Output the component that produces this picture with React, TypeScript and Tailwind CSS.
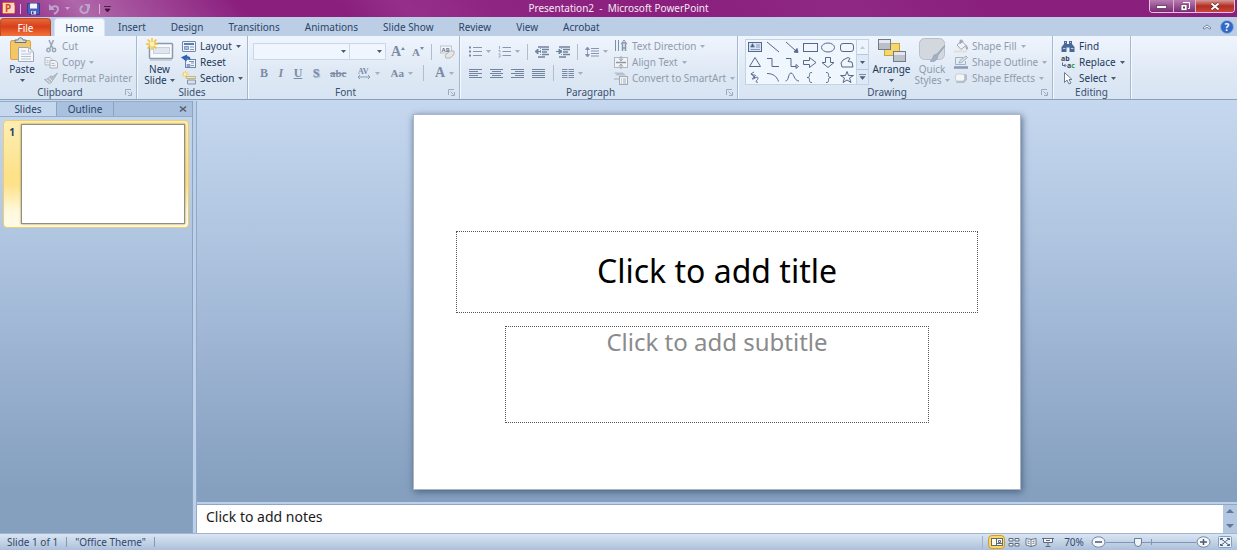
import React, { useState } from 'react';

interface IconProps {
  w?: number;
  h?: number;
  className?: string;
  children: React.ReactNode;
}

const Icon: React.FC<IconProps> = ({ w = 14, h = 14, className = '', children }) => (
  <svg width={w} height={h} viewBox={`0 0 ${w} ${h}`} fill="none" className={`shrink-0 overflow-visible ${className}`} aria-hidden="true">
    {children}
  </svg>
);

const Caret: React.FC<{ muted?: boolean }> = ({ muted }) => (
  <Icon w={5} h={3}>
    <path d="M0 0h5L2.500 3z" fill={muted ? '#a3afbd' : '#4b5a70'} />
  </Icon>
);

const Divider = () => <span className="h-4 w-px bg-[#aebdd0]" />;

/* ---------- ribbon building blocks ---------- */

interface GroupProps {
  label: string;
  width: string;
  launcher?: boolean;
  children: React.ReactNode;
}

const Group: React.FC<GroupProps> = ({ label, width, launcher, children }) => (
  <section aria-label={label} className={`flex shrink-0 flex-col border-r border-[#a3b8d1] shadow-[1px_0_0_#f4f9ff] ${width}`}>
    <div className="flex h-[50px] items-start">{children}</div>
    <div className="flex h-[13px] items-center">
      <span className="flex-1 text-center text-[10px] leading-[13px] text-[#3a506f]">{label}</span>
      {launcher && (
        <button aria-label={`${label} options`} className="flex w-4 justify-center">
          <Icon w={7} h={7}>
            <path d="M0.5 6V0.5H6M2.500 2.500L5.500 5.500M6.500 3v3.500H3" stroke="#9aacc2" />
          </Icon>
        </button>
      )}
    </div>
  </section>
);

interface ItemProps {
  icon: React.ReactNode;
  label: string;
  caret?: boolean;
  muted?: boolean;
}

const Item: React.FC<ItemProps> = ({ icon, label, caret, muted }) => (
  <button className={`flex h-4 items-center gap-1 whitespace-nowrap text-[10px] leading-4 ${muted ? 'text-[#8f9bab]' : 'text-[#1e395b]'}`}>
    {icon}
    <span>{label}</span>
    {caret && <Caret muted={muted} />}
  </button>
);

interface BigItemProps {
  icon: React.ReactNode;
  lines: string[];
  width: string;
  muted?: boolean;
}

const BigItem: React.FC<BigItemProps> = ({ icon, lines, width, muted }) => (
  <button className={`flex shrink-0 flex-col items-center text-[10px] leading-[11px] ${width} ${muted ? 'text-[#8f9bab]' : 'text-[#1e395b]'}`}>
    <span className="flex h-7 items-center">{icon}</span>
    <span>{lines[0]}</span>
    <span className="flex h-[11px] items-center gap-[3px]">
      {lines[1]}
      <Caret muted={muted} />
    </span>
  </button>
);

const Tool: React.FC<{ label: string; caret?: boolean; children: React.ReactNode }> = ({ label, caret, children }) => (
  <button aria-label={label} className="flex h-4 items-center gap-1 text-[#7c8ba3]">
    {children}
    {caret && <Caret muted />}
  </button>
);

/* ---------- icons ---------- */

const PasteIcon = () => (
  <Icon w={26} h={26}>
    <rect x="1.500" y="3.500" width="20" height="19" rx="1.500" fill="#f3c766" stroke="#d9a544" />
    <path d="M6 5.500V3h3c0-3 5-3 5 0h3v2.500z" fill="#d5d8dc" stroke="#6c727b" />
    <path d="M9.500 10.500h10l5 4.500v9.500h-15z" fill="#f6f8fb" stroke="#9aa8bd" />
    <path d="M19.500 10.500V15h5M12 14h5M12 17h10M12 19.500h10M12 22h10" stroke="#b6c2d4" />
  </Icon>
);

const CutIcon = () => (
  <Icon>
    <path d="M5 1l4 9M9.500 1L6 9" stroke="#9aa6b6" strokeWidth="1.500" />
    <circle cx="4.500" cy="11" r="1.700" stroke="#9aa6b6" strokeWidth="1.500" />
    <circle cx="10" cy="11" r="1.700" stroke="#9aa6b6" strokeWidth="1.500" />
  </Icon>
);

const CopyIcon = () => (
  <Icon>
    <path d="M1 2.500h5l2 2V10H1z" fill="#eef1f5" stroke="#b1b8c2" />
    <path d="M6 5.500h5l2.500 2V13H6z" fill="#f1f3f6" stroke="#a9b0bb" />
    <path d="M7.500 8.500h3M7.500 10.500h4M2.500 5.500h2M2.500 7.500h2" stroke="#b5bcc7" />
  </Icon>
);

const BrushIcon = () => (
  <Icon>
    <path d="M13.500 2L10 7.500l-3.500 5C5 13 3 11 .5 8.500 3 8.500 5 7 6.500 5l2.500.5z" fill="#b5bec9" stroke="#a2acb9" strokeWidth=".8" />
    <path d="M2.500 8.500l4 3.500M5 7l3 3" stroke="#e7ebf0" />
  </Icon>
);

const Burst = () => (
  <>
    <path d="M6 0v12M0 6h12M1.500 1.500l9 9M10.500 1.500l-9 9" stroke="#f5c02c" strokeWidth="1.500" />
    <circle cx="6" cy="6" r="2.500" fill="#fff3a8" />
  </>
);

const NewSlideIcon = () => (
  <Icon w={28} h={24}>
    <rect x="3.500" y="5.500" width="23" height="15" rx="1" fill="#f8fafc" stroke="#8c99ab" strokeWidth="1.500" />
    <rect x="7.500" y="9.500" width="16" height="6" fill="#dfe6ee" stroke="#c6d0dc" />
    <path d="M4 22h22" stroke="#aab5c4" />
    <Burst />
  </Icon>
);

const LayoutIcon = () => (
  <Icon>
    <rect x=".5" y="2.500" width="13" height="10" rx=".5" fill="#eef4fb" stroke="#7285a3" />
    <path d="M2 5h10" stroke="#5d7fb5" strokeWidth="2" />
    <path d="M2.500 7.500h4v3h-4z" fill="#a9c0e0" stroke="#7f98bf" />
    <path d="M8 8h4M8 10.500h4" stroke="#8396b1" />
  </Icon>
);

const ResetIcon = () => (
  <Icon>
    <rect x="3.500" y="4.500" width="10" height="8" fill="#eef4fb" stroke="#7285a3" />
    <path d="M5 9.500h3v2H5zM9 8h3M9 10.500h3M7 6.500h5" fill="#9eb6d8" stroke="#7f98bf" />
    <path d="M8 4.500C8 1.500 4.500 1 3 3M0 2.500l4.500-2-.5 5z" fill="#2c62b4" stroke="#2c62b4" strokeWidth="1.200" />
  </Icon>
);

const SectionIcon = () => (
  <Icon>
    <path d="M4.500 5.500h9v2h-9z" fill="#f4e8b5" stroke="#b4a86f" strokeWidth=".8" />
    <path d="M5.500 9h8v4h-8z" fill="#d6dfeb" stroke="#8494aa" />
    <g transform="scale(.55)"><Burst /></g>
  </Icon>
);

const EraserIcon = () => (
  <Icon w={16} h={14}>
    <rect x="1.500" y="1" width="11" height="7" fill="#f2f5f9" stroke="#b0bac7" strokeWidth=".8" />
    <text x="2.500" y="7" fontSize="6" fontFamily="Noto Sans" fontWeight="700" fill="#707d91">AB</text>
    <path d="M6 10.500l5-4.500h4v3.500l-4 3.500H7z" fill="#e8e6e1" stroke="#b5b3ad" />
  </Icon>
);

const SpacingIcon = () => (
  <Icon w={14} h={11}>
    <text x="1" y="6" fontSize="8" fontFamily="Liberation Serif" fontWeight="700" fill="#7c8ba3">AV</text>
    <path d="M1 9h12M3 7L1 9l2 2M11 7l2 2-2 2" stroke="#8b9ab1" />
  </Icon>
);

const BulletsIcon = () => (
  <Icon w={13} h={11}>
    <path d="M4 1.500H13M4 5.500H13M4 9.500H13" stroke="#8596b0" />
    <path d="M0 1.500h2M0 5.500h2M0 9.500h2" stroke="#7488a8" strokeWidth="2" />
  </Icon>
);

const NumberingIcon = () => (
  <Icon w={13} h={11}>
    <path d="M4.500 1.500H13M4.500 5.500H13M4.500 9.500H13" stroke="#8596b0" />
    <path d="M1.500 0v3M.5 4.500h1.500v2M.5 8h1.500v3H.5" stroke="#8a9ab3" strokeWidth=".8" />
  </Icon>
);

const IndentIcon: React.FC<{ flip?: boolean }> = ({ flip }) => (
  <Icon w={14} h={12}>
    <path d="M3 1h11M7 3.500h7M7 6h5M7 8.500h7M3 11h7" stroke="#72839e" strokeWidth="1.500" />
    <path d={flip ? 'M0 5.500h4M3 3l3 2.500L3 8z' : 'M6 5.500H1M3 3L0 5.500 3 8z'} fill="#72839e" stroke="#72839e" />
    <path d="M5.500 0v12" stroke="#8c9bb2" strokeDasharray="1 1" />
  </Icon>
);

const LineSpacingIcon = () => (
  <Icon w={14} h={12}>
    <path d="M6 2.500h8M6 5h8M6 7.500h8M6 10h8" stroke="#8797b0" />
    <path d="M2.500 2v8M.5 3.500L2.500 1l2 2.500zM.5 8.500l2 2.500 2-2.500z" fill="#7d8ea9" stroke="#7d8ea9" strokeWidth=".8" />
  </Icon>
);

const alignPaths: Record<string, string> = {
  left: 'M0 .5h13M0 2.500h9M0 4.500h13M0 6.500h9M0 8.500h13',
  center: 'M0 .5h13M2 2.500h9M0 4.500h13M2 6.500h9M0 8.500h13',
  right: 'M0 .5h13M4 2.500h9M0 4.500h13M4 6.500h9M0 8.500h13',
  justify: 'M0 .5h13M0 2.500h13M0 4.500h13M0 6.500h13M0 8.500h13',
};

const AlignIcon: React.FC<{ kind: string }> = ({ kind }) => (
  <Icon w={13} h={9}>
    <path d={alignPaths[kind]} stroke="#72839e" />
  </Icon>
);

const ColumnsIcon = () => (
  <Icon w={12} h={9}>
    <path d="M0 .5h5.500M0 2.500h5.500M0 4.500h5.500M0 6.500h5.500M0 8.500h5.500M6.500 .5H12M6.500 2.500H12M6.500 4.500H12M6.500 6.500H12M6.500 8.500H12" stroke="#7889a4" />
  </Icon>
);

const TextDirectionIcon = () => (
  <Icon>
    <path d="M1.500 1v11M4.500 1v11" stroke="#7f8fa8" />
    <path d="M8.500 12V4.500c0-1 3-1 3 0V12M8 9h4" stroke="#8796ad" strokeWidth="1.500" />
    <path d="M7 5l3-4 3 4" stroke="#8796ad" />
  </Icon>
);

const AlignTextIcon = () => (
  <Icon>
    <rect x=".5" y="2.500" width="13" height="10" fill="#f2f3f4" stroke="#b4b8be" />
    <path d="M2 7.500h10" stroke="#8c96a5" strokeWidth="1.500" />
    <path d="M7 1v4M5 3.500L7 6l2-2.500M7 14v-4M5 11.500L7 9l2 2.500" stroke="#98a1ae" />
  </Icon>
);

const SmartArtIcon = () => (
  <Icon>
    <path d="M0 1.500h9l3 3H3z" fill="#b7bfca" />
    <path d="M0 7h5v2H0z" fill="#c3cad3" />
    <rect x="5.500" y="5.500" width="8" height="8" fill="#f0f2f5" stroke="#a0a9b5" />
    <path d="M7 8h1M9 8h3M7 10h1M9 10h3M7 12h1M9 12h3" stroke="#a8b0bc" />
  </Icon>
);

const ArrangeIcon = () => (
  <Icon w={28} h={24}>
    <rect x="6.500" y="5.500" width="15" height="12" fill="#f7d765" stroke="#c9a43b" />
    <rect x=".5" y="1.500" width="12" height="10" fill="#b9bfc9" stroke="#6f7a8a" />
    <rect x="15.500" y="13.500" width="12" height="10" fill="#bdc3cd" stroke="#6f7a8a" />
    <path d="M1 3.500h11M16 15.500h11" stroke="#e4e7eb" strokeWidth="3" />
  </Icon>
);

const QuickStylesIcon = () => (
  <Icon w={28} h={26}>
    <rect x="1.500" y="1.500" width="25" height="21" rx="5" fill="#d3d8de" stroke="#b8c0ca" />
    <path d="M27 9l-7 9-1 4c-2 3-5 3-7 2 3-1 2-3 4-6l3-1 7-8z" fill="#a3b0c2" stroke="#93a2b6" strokeWidth=".8" />
  </Icon>
);

const ShapeFillIcon = () => (
  <Icon>
    <path d="M3 6l4.500-4L12 6.500 7 10.500z" fill="#f1f3f5" stroke="#a0a8b3" />
    <path d="M6 5V2c0-2 3-1 3 1M12 6.500c2 1 1.500 4 1 4s-1-2-1-4z" fill="#9fa8b5" stroke="#9fa8b5" />
    <path d="M0 12.500h13" stroke="#e3dfd8" strokeWidth="2" />
  </Icon>
);

const ShapeOutlineIcon = () => (
  <Icon>
    <path d="M9 2.500H1.500v7h10V6" stroke="#a6b1c0" />
    <path d="M5 8l1-2.500L12 1l1.500 1.500-6 5z" fill="#dde2e8" stroke="#97a3b3" strokeWidth=".8" />
    <path d="M0 12.500h14" stroke="#8999b3" strokeWidth="2.500" />
  </Icon>
);

const ShapeEffectsIcon = () => (
  <Icon>
    <path d="M2 11l2-8h7.500q1.500 0 1.500 2v3.500l-3 3.500H3z" fill="#b4bcc7" />
    <rect x="1.500" y="3" width="9" height="7" rx="2" fill="#f4f6f8" stroke="#c0c7d0" strokeWidth=".8" />
  </Icon>
);

const FindIcon = () => (
  <Icon>
    <path d="M3 2h3v3h2V2h3v3l2.500 3v5h-5V8.500h-3V13h-5V8L3 5z" fill="#4a6797" />
    <path d="M2 9.500h2.500M10 9.500h2.500M4 3.500h1M9 3.500h1" stroke="#b8c9e4" strokeWidth="1.200" />
  </Icon>
);

const ReplaceIcon = () => (
  <Icon>
    <text x="0" y="6" fontSize="7" fontFamily="Noto Sans" fontWeight="700" fill="#3a4658">ab</text>
    <path d="M1.500 7.500V10.500h3M3.500 9L5 10.500l-1.500 1.500" stroke="#4c6ea6" />
    <text x="6" y="13" fontSize="7" fontFamily="Noto Sans" fontWeight="700" fill="#3a4658">
      a<tspan fill="#3c9a3c">c</tspan>
    </text>
  </Icon>
);

const SelectIcon = () => (
  <Icon>
    <path d="M3.500 1.500v10l2.500-2.500 2 4 2-1-2-3.500h3z" fill="#fff" stroke="#6b7c95" />
  </Icon>
);

/* ---------- shapes gallery ---------- */

const s = '#55698a';
const shapes: { name: string; art: React.ReactNode }[] = [
  {
    name: 'Text Box',
    art: (
      <>
        <rect x="1.500" y="2.500" width="13" height="9" fill="#d6e3f4" stroke={s} />
        <path d="M3.500 7L5.500 3.500 7.500 7zM9 5h4M9 7h4M3.500 9.500H13" fill="#3c5173" stroke="#7387a8" strokeWidth=".8" />
      </>
    ),
  },
  { name: 'Line', art: <path d="M2 2l12 10" stroke={s} /> },
  { name: 'Arrow', art: <path d="M2 2l10 9M14 12.500l-4-.5 3-3.500z" stroke={s} fill={s} /> },
  { name: 'Rectangle', art: <rect x="1.500" y="3.500" width="14" height="8" fill="#f1f6fc" stroke={s} /> },
  { name: 'Oval', art: <ellipse cx="8" cy="7.500" rx="6.500" ry="4.500" fill="#f1f6fc" stroke={s} /> },
  { name: 'Rounded Rectangle', art: <rect x="1.500" y="3.500" width="13" height="8" rx="2.500" fill="#f1f6fc" stroke={s} /> },
  { name: 'Triangle', art: <path d="M8 2.500l5.500 9h-11z" fill="#f1f6fc" stroke={s} /> },
  { name: 'Elbow', art: <path d="M2 3.500h5v8h7" stroke={s} /> },
  { name: 'Elbow Arrow', art: <path d="M2 3.500h5v8h5M12 9.500l2.500 2-2.500 2z" stroke={s} /> },
  { name: 'Right Arrow', art: <path d="M1.500 5.500h6v-3l6.500 5-6.500 5v-3h-6z" fill="#f1f6fc" stroke={s} /> },
  { name: 'Down Arrow', art: <path d="M5.500 2.500h5v5H14l-6 5-6-5h3.500z" fill="#f1f6fc" stroke={s} /> },
  { name: 'Freeform', art: <path d="M4 5l5-2.500 2 1-2 3 4 .5 1 5H3l-1-4z" fill="#f1f6fc" stroke={s} /> },
  { name: 'Scribble', art: <path d="M7 2C3 4 4 5 6 5s4 0 1 2-2 3 1 1 4 0 2 2 0 3 1 2M4 3l4 5" stroke={s} /> },
  { name: 'Arc', art: <path d="M2 3.500c6 0 10 3 11.500 8" stroke={s} /> },
  { name: 'Curve', art: <path d="M1.500 11C5 11 4 3 7 3s3 8 8 8" stroke={s} /> },
  { name: 'Left Brace', art: <path d="M10 2.500C7 2.500 7.500 4 7.500 5.500S6.500 7.500 5 7.500c1.500 0 2.500.5 2.500 2s-.5 3 2.500 3" stroke={s} /> },
  { name: 'Right Brace', art: <path d="M6 2.500c3 0 2.500 1.500 2.500 3s1 2 2.500 2c-1.500 0-2.500.5-2.500 2s.5 3-2.500 3" stroke={s} /> },
  { name: 'Star', art: <path d="M8 1.500l1.500 4h5l-4 2.500 1.500 4.500-4-2.500-4 2.500L5.500 8l-4-2.500h5z" fill="#f1f6fc" stroke={s} /> },
];

const ShapesGallery = () => (
  <div className="ml-[7px] mt-[3px] flex h-[46px] w-[124px] shrink-0 border border-[#c3d3e6] bg-[#f0f6fd]">
    <div className="grid flex-1 grid-cols-6 grid-rows-3">
      {shapes.map((shape) => (
        <button key={shape.name} aria-label={shape.name} className="flex items-center justify-center">
          <Icon w={16} h={14}>{shape.art}</Icon>
        </button>
      ))}
    </div>
    <div className="flex w-3 flex-col border-l border-[#c3d3e6] bg-[#dde9f7]">
      <button aria-label="Scroll up" className="flex flex-1 items-center justify-center bg-[#edf4fc]">
        <Icon w={5} h={3}><path d="M0 3h5L2.500 0z" fill="#bccadb" /></Icon>
      </button>
      <button aria-label="Scroll down" className="flex flex-1 items-center justify-center border-y border-[#b4c7df]"><Caret /></button>
      <button aria-label="More shapes" className="flex flex-1 items-center justify-center">
        <Icon w={7} h={6}><path d="M0 .5h7M1 2.500h5L3.500 5.500z" fill="#4b5a70" stroke="#66758c" strokeWidth=".8" /></Icon>
      </button>
    </div>
  </div>
);

/* ---------- window chrome ---------- */

const TitleBar = () => (
  <header className="flex h-[17px] items-start bg-[linear-gradient(50deg,#8a1f7e_0%,#b067aa_7%,#8a1f7e_20%,#8a1f7e_28%,#952f8a_33%,#8f2583_40%,#8a1f7e_55%,#8f2885_68%,#8a1f7e_80%)]">
    <div className="flex flex-1 items-center gap-1 pl-0.5">
      <Icon w={14} h={17}>
        <rect x=".5" y="2.500" width="12" height="11" rx="1" fill="#f6d9c6" stroke="#e2572b" />
        <path d="M12.500 5v7.500" stroke="#f5a27e" />
        <text x="3" y="12" fontSize="10" fontFamily="Noto Sans" fontWeight="700" fill="#d5471d">P</text>
      </Icon>
      <span className="h-2.5 w-px bg-[#d9b5d6]" />
      <button aria-label="Save" className="ml-0.5">
        <Icon w={13} h={13}>
          <path d="M.5 1.500h12v11H2l-1.500-1.500z" fill="#4a5fc0" stroke="#343f94" />
          <path d="M3 1.500h7v5H3z" fill="#f4f6fb" />
          <path d="M4 9h5v3.500H4z" fill="#d0d6ea" />
          <path d="M5 9.500h1.500V12H5z" fill="#343f94" />
        </Icon>
      </button>
      <button aria-label="Undo" className="ml-1 flex items-center gap-1">
        <Icon w={13} h={12}>
          <path d="M3 5c3-3 7-2 7 1s-2 4-4 5" stroke="#b9a5cb" strokeWidth="2" />
          <path d="M1 1v6h6z" fill="#b9a5cb" />
        </Icon>
        <Icon w={5} h={3}><path d="M0 0h5L2.500 3z" fill="#c9a3c8" /></Icon>
      </button>
      <button aria-label="Redo" className="ml-1">
        <Icon w={13} h={12}>
          <path d="M5 3C2 4 1.500 7 3.500 9s6 1 6.500-2V4" stroke="#b9a5cb" strokeWidth="2" />
          <path d="M6 1h6v5z" fill="#b9a5cb" />
        </Icon>
      </button>
      <span className="ml-1 h-2.5 w-px bg-[#d9b5d6]" />
      <button aria-label="Customize Quick Access Toolbar">
        <Icon w={7} h={6}><path d="M0 .5h7M1 3h5L3.500 6z" fill="#3a1038" stroke="#3a1038" strokeWidth=".8" /></Icon>
      </button>
    </div>
    <h1 className="whitespace-pre text-[10px] leading-[17px] text-[#f5e9f4]">{'Presentation2  -  Microsoft PowerPoint'}</h1>
    <div className="flex flex-1 justify-end pr-0.5">
      <div className="flex h-[13px] overflow-hidden rounded-b border border-t-0 border-[#e3c3e0]">
        <button aria-label="Minimize" className="flex w-6 items-center justify-center border-r border-[#dab4d6] bg-[linear-gradient(#b77cb2,#7b2a72)]">
          <Icon w={11} h={8}><rect x=".5" y="3.500" width="10" height="3" fill="#fff" stroke="#5b3559" strokeWidth=".8" /></Icon>
        </button>
        <button aria-label="Restore" className="flex w-[22px] items-center justify-center border-r border-[#dab4d6] bg-[linear-gradient(#b77cb2,#7b2a72)]">
          <Icon w={10} h={9}>
            <path d="M3 .5h6.500v6H8" stroke="#fff" />
            <rect x="1" y="2.500" width="6" height="6" fill="#fff" stroke="#6b4a68" strokeWidth=".8" />
            <rect x="3" y="4.500" width="2" height="2" fill="#6b3a66" />
          </Icon>
        </button>
        <button aria-label="Close" className="flex w-[38px] items-center justify-center bg-[linear-gradient(#d79a9a,#b32d24_50%,#c9453a)]">
          <Icon w={10} h={9}>
            <path d="M1.500 1.500l7 6M8.500 1.500l-7 6" stroke="#5a2626" strokeWidth="3" />
            <path d="M1.500 1.500l7 6M8.500 1.500l-7 6" stroke="#fff" strokeWidth="2" />
          </Icon>
        </button>
      </div>
    </div>
  </header>
);

const TABS = ['Insert', 'Design', 'Transitions', 'Animations', 'Slide Show', 'Review', 'View', 'Acrobat'];

const RibbonTabs = () => (
  <nav className="flex h-[19px] items-end bg-[#bccee5] text-[10px] leading-[18px] text-[#2b4568]">
    <button className="h-[18px] w-[51px] rounded-t-sm border border-b-0 border-[#c44a1e] bg-[linear-gradient(#e4683c,#d8401a_45%,#f2733a)] leading-4 text-white">File</button>
    <button aria-current="page" className="ml-[3px] h-[18px] w-[51px] rounded-t-sm border border-b-0 border-[#d7e3f1] bg-[#f3f8fe] leading-4">Home</button>
    <div className="ml-px flex gap-px">
      {TABS.map((tab) => (
        <button key={tab} className="whitespace-nowrap px-3">{tab}</button>
      ))}
    </div>
    <div className="ml-auto flex h-[19px] items-center gap-2 pr-[3px]">
      <button aria-label="Minimize the Ribbon">
        <Icon w={10} h={6}><path d="M1 4l4-3 4 3-1 1.200-3-2-3 2z" fill="#fff" stroke="#5a6b84" strokeWidth=".8" /></Icon>
      </button>
      <button aria-label="Help" className="flex h-3.5 w-3.5 items-center justify-center rounded-full border border-[#8fb1e3] bg-[#3269c4] text-[10px] font-bold leading-3 text-white">?</button>
    </div>
  </nav>
);

const FontGroup = () => (
  <Group label="Font" width="w-[212px]" launcher>
    <div className="flex flex-1 flex-col gap-[5px] pl-[5px] pt-[7px] font-['Liberation_Serif',serif]">
      <div className="flex h-[17px] items-center">
        <div className="relative">
          <select aria-label="Font" className="block h-[17px] w-[97px] appearance-none border border-[#c9d8ea] bg-[#eff6fd] text-[10px]"><option /></select>
          <span className="pointer-events-none absolute right-1 top-[7px]"><Caret /></span>
        </div>
        <div className="relative">
          <select aria-label="Font size" className="block h-[17px] w-9 appearance-none border border-l-0 border-[#c9d8ea] bg-[#eff6fd] text-[10px]"><option /></select>
          <span className="pointer-events-none absolute right-1 top-[7px]"><Caret /></span>
        </div>
        <div className="flex flex-1 items-center justify-between pl-[5px] pr-1">
          <Tool label="Grow font">
            <b className="text-[14px] leading-4">A</b>
            <Icon w={4} h={9} className="-ml-1"><path d="M0 3h4L2 0z" fill="#7c8ba3" /></Icon>
          </Tool>
          <Tool label="Shrink font">
            <b className="text-[11px] leading-4">A</b>
            <Icon w={4} h={9} className="-ml-1"><path d="M0 0h4L2 3z" fill="#7c8ba3" /></Icon>
          </Tool>
          <Divider />
          <Tool label="Clear formatting"><EraserIcon /></Tool>
        </div>
      </div>
      <div className="flex h-4 items-center justify-between pl-[7px] pr-[5px] text-[12px] leading-4">
        <Tool label="Bold"><b>B</b></Tool>
        <Tool label="Italic"><b className="italic">I</b></Tool>
        <Tool label="Underline"><b className="underline">U</b></Tool>
        <Tool label="Shadow"><b className="[text-shadow:1px_1px_1px_#8fa0b9]">S</b></Tool>
        <Tool label="Strikethrough"><b className="text-[11px] line-through">abc</b></Tool>
        <Tool label="Character spacing" caret><SpacingIcon /></Tool>
        <Tool label="Change case" caret><b className="text-[11px]">Aa</b></Tool>
        <Divider />
        <Tool label="Font color" caret><b className="text-[14px]">A</b></Tool>
      </div>
    </div>
  </Group>
);

const ParagraphGroup = () => (
  <Group label="Paragraph" width="w-[278px]" launcher>
    <div className="flex w-[154px] flex-col gap-[5px] pl-[9px] pt-[7px]">
      <div className="flex h-[17px] items-center justify-between pr-1.5">
        <Tool label="Bullets" caret><BulletsIcon /></Tool>
        <Tool label="Numbering" caret><NumberingIcon /></Tool>
        <Divider />
        <Tool label="Decrease indent"><IndentIcon /></Tool>
        <Tool label="Increase indent"><IndentIcon flip /></Tool>
        <Divider />
        <Tool label="Line spacing" caret><LineSpacingIcon /></Tool>
      </div>
      <div className="flex h-4 items-center gap-2">
        {Object.keys(alignPaths).map((kind) => (
          <Tool key={kind} label={`Align ${kind}`}><AlignIcon kind={kind} /></Tool>
        ))}
        <Divider />
        <Tool label="Columns" caret><ColumnsIcon /></Tool>
      </div>
    </div>
    <div className="flex flex-col items-start pt-0.5">
      <Item muted caret label="Text Direction" icon={<TextDirectionIcon />} />
      <Item muted caret label="Align Text" icon={<AlignTextIcon />} />
      <Item muted caret label="Convert to SmartArt" icon={<SmartArtIcon />} />
    </div>
  </Group>
);

const Ribbon = () => (
  <div className="flex h-16 overflow-hidden border-b border-[#8c9fb8] bg-[linear-gradient(#eff5fd,#dfe9f5_55%,#d7e4f2)]">
    <Group label="Clipboard" width="w-[137px]" launcher>
      <BigItem width="w-[44px]" lines={['Paste', '']} icon={<PasteIcon />} />
      <div className="flex flex-col items-start pt-0.5">
        <Item muted label="Cut" icon={<CutIcon />} />
        <Item muted caret label="Copy" icon={<CopyIcon />} />
        <Item muted label="Format Painter" icon={<BrushIcon />} />
      </div>
    </Group>
    <Group label="Slides" width="w-[111px]">
      <BigItem width="w-[45px]" lines={['New', 'Slide']} icon={<NewSlideIcon />} />
      <div className="flex flex-col items-start pt-0.5">
        <Item caret label="Layout" icon={<LayoutIcon />} />
        <Item label="Reset" icon={<ResetIcon />} />
        <Item caret label="Section" icon={<SectionIcon />} />
      </div>
    </Group>
    <FontGroup />
    <ParagraphGroup />
    <Group label="Drawing" width="w-[315px]" launcher>
      <ShapesGallery />
      <BigItem width="w-[45px]" lines={['Arrange', '']} icon={<ArrangeIcon />} />
      <BigItem muted width="w-[36px]" lines={['Quick', 'Styles']} icon={<QuickStylesIcon />} />
      <div className="ml-1 flex flex-col items-start pt-0.5">
        <Item muted caret label="Shape Fill" icon={<ShapeFillIcon />} />
        <Item muted caret label="Shape Outline" icon={<ShapeOutlineIcon />} />
        <Item muted caret label="Shape Effects" icon={<ShapeEffectsIcon />} />
      </div>
    </Group>
    <Group label="Editing" width="w-[78px]">
      <div className="flex flex-col items-start pl-2 pt-0.5">
        <Item label="Find" icon={<FindIcon />} />
        <Item caret label="Replace" icon={<ReplaceIcon />} />
        <Item caret label="Select" icon={<SelectIcon />} />
      </div>
    </Group>
  </div>
);

/* ---------- work area ---------- */

const SlidesPane = () => (
  <aside className="flex w-[193px] shrink-0 flex-col border-r border-[#8ba3c4]">
    <div className="flex h-4 items-stretch border-y border-[#94abc9] bg-[#a9c0de] text-[10px] leading-[14px] text-[#2b4568]">
      <button aria-current="true" className="w-[56px] bg-[#c6d8ee]">Slides</button>
      <button className="w-[58px] border-x border-[#8ba3c4]">Outline</button>
      <button aria-label="Close pane" className="ml-auto flex w-[18px] items-center justify-center">
        <Icon w={8} h={6}><path d="M1 .5l6 5M7 .5l-6 5" stroke="#5b5f66" strokeWidth="1.600" /></Icon>
      </button>
    </div>
    <button
      aria-label="Slide 1"
      className="mx-[3px] mt-[3px] flex h-[108px] rounded-sm border border-[#f0cc6a] bg-[linear-gradient(#fdeeb4,#fde28a_50%,#fde28a_60%,#fff8dc_85%,#fffbe8)] p-[3px]"
    >
      <span className="w-3.5 pr-1 text-center text-[10px] font-bold leading-4 text-[#2b3d5c]">1</span>
      <span className="h-full flex-1 border border-[#8f8f86] bg-white shadow-[0_0_2px_#a08a4a]" />
    </button>
  </aside>
);

const Slide = () => (
  <div className="grid aspect-[608/376] w-[58.500%] grid-rows-[117fr_82fr_13fr_97fr_67fr] justify-items-center border border-[#aab4c2] bg-white shadow-[1px_2px_7px_#4c6383]">
    <button className="row-start-2 w-[86%] border border-dotted border-[#555] pb-0.5 text-[32px] leading-9 text-black">Click to add title</button>
    <button className="row-start-4 flex w-[70%] justify-center border border-dotted border-[#555] pt-px text-[24px] leading-7 text-[#8b8b8b]">Click to add subtitle</button>
  </div>
);

const Notes = () => (
  <div className="flex h-7 items-stretch bg-white">
    <textarea
      aria-label="Notes"
      placeholder="Click to add notes"
      className="h-7 flex-1 resize-none overflow-hidden px-[9px] pt-0.5 text-[14px] leading-5 outline-none placeholder:text-[#1a1a1a]"
    />
    <div className="flex w-3.5 flex-col items-center justify-between bg-[#b3c7e1] py-1">
      <button aria-label="Scroll notes up"><Icon w={8} h={5}><path d="M0 4h8L4 0z" fill="#5f7799" /></Icon></button>
      <button aria-label="Scroll notes down"><Icon w={8} h={5}><path d="M0 0h8L4 4z" fill="#5f7799" /></Icon></button>
    </div>
  </div>
);

/* ---------- status bar ---------- */

const k = '#5f6b7d';
const VIEWS = [
  { name: 'Normal', art: <><rect x=".5" y="1.500" width="11" height="7" fill="#fffbe6" stroke={k} /><path d="M5.500 1.500v7M7.500 3.500h2v2h-2zM6 6.500h5" stroke={k} /></> },
  { name: 'Slide Sorter', art: <path d="M1 1.500h4v2.500H1zM7 1.500h4v2.500H7zM1 6.500h4V9H1zM7 6.500h4V9H7z" fill="#f3f6fa" stroke={k} /> },
  { name: 'Reading View', art: <path d="M1 1.500l5 1 5-1V8L6 9.500 1 8zM6 2.500v7M2.500 4l2 .5M2.500 6l2 .5M7.500 4.500l2-.5M7.500 6.500l2-.5" fill="#f3f6fa" stroke={k} strokeWidth=".9" /> },
  { name: 'Slide Show', art: <path d="M0 1.500h12M1.500 1.500V5.500h9v-4M6 5.500V9M3.500 9.500h5M4 3.500h4" fill="#f3f6fa" stroke={k} /> },
];

const StatusBar = () => {
  const [view, setView] = useState('Normal');
  const [zoom, setZoom] = useState(34);

  return (
    <footer className="flex h-[17px] items-center border-t border-[#a3b5cd] bg-[linear-gradient(#d9e5f3,#c3d3e7_50%,#adc0da)] text-[10px] leading-4 text-[#33486a]">
      <span className="pl-[7px] pr-2">Slide 1 of 1</span>
      <span className="h-2.5 w-px bg-[#8599b6]" />
      <span className="px-2">"Office Theme"</span>
      <span className="h-2.5 w-px bg-[#8599b6]" />
      <div className="ml-auto flex items-center pr-[5px]">
        <span className="mr-[5px] h-3 w-px bg-[#9fb2cc]" />
        {VIEWS.map((v) => (
          <button
            key={v.name}
            aria-label={v.name}
            aria-pressed={view === v.name}
            onClick={() => setView(v.name)}
            className={`flex h-3.5 w-[17px] items-center justify-center ${view === v.name ? 'rounded-sm border border-[#d39b2b] bg-[#fbd85f]' : ''}`}
          >
            <Icon w={12} h={10}>{v.art}</Icon>
          </button>
        ))}
        <span className="ml-2 w-5 text-center">70%</span>
        <button aria-label="Zoom out" onClick={() => setZoom(Math.max(0, zoom - 5))} className="ml-[7px]">
          <Icon w={15} h={12}><ellipse cx="7.500" cy="6" rx="6.500" ry="5.200" fill="#f3f6fa" stroke="#76869e" /><path d="M4 6h7" stroke="#4c5a70" strokeWidth="1.500" /></Icon>
        </button>
        <input
          type="range"
          aria-label="Zoom"
          min={0}
          max={100}
          value={zoom}
          onChange={(e) => setZoom(Number(e.target.value))}
          className="h-3 w-[90px] appearance-none bg-[linear-gradient(#8296b3,#8296b3),linear-gradient(#8296b3,#8296b3)] bg-[length:100%_1px,1px_6px] bg-center bg-no-repeat [&::-webkit-slider-thumb]:h-[9px] [&::-webkit-slider-thumb]:w-2 [&::-webkit-slider-thumb]:appearance-none [&::-webkit-slider-thumb]:rounded-b [&::-webkit-slider-thumb]:border [&::-webkit-slider-thumb]:border-[#6d7d95] [&::-webkit-slider-thumb]:bg-[#f0f4f9]"
        />
        <button aria-label="Zoom in" onClick={() => setZoom(Math.min(100, zoom + 5))}>
          <Icon w={15} h={12}><ellipse cx="7.500" cy="6" rx="6.500" ry="5.200" fill="#f3f6fa" stroke="#76869e" /><path d="M4 6h7M7.500 3v6" stroke="#4c5a70" strokeWidth="1.500" /></Icon>
        </button>
        <button aria-label="Fit slide to window" className="ml-[7px]">
          <Icon w={14} h={12}>
            <rect x=".5" y=".5" width="13" height="11" rx="1" fill="#eaf1f9" stroke="#7fa0cb" />
            <path d="M2.500 4V2.500H5M9 2.500h2.500V4M2.500 8v1.500H5M9 9.500h2.500V8M3 3l3 2M11 3L8 5M3 9l3-2M11 9L8 7" stroke="#4f5e75" />
            <path d="M6 6h2" stroke="#4f5e75" strokeWidth="1.500" />
          </Icon>
        </button>
      </div>
    </footer>
  );
};

export default function App() {
  return (
    <div className="flex min-h-screen flex-col bg-[#bccee5] font-['Noto_Sans',sans-serif]">
      <TitleBar />
      <RibbonTabs />
      <Ribbon />
      <main className="flex flex-1 bg-[linear-gradient(#c6d8ef,#a6bdda_45%,#859fbf_90%)] pt-px">
        <SlidesPane />
        <div className="w-1 shrink-0 border-r border-[#93a9c8] bg-[#bdd0e9]" />
        <div className="flex min-w-0 flex-1 flex-col">
          <div className="flex flex-1 items-start justify-center pb-2.5 pt-[13px]">
            <Slide />
          </div>
          <div className="h-[3px] shrink-0 border-b border-[#8fa6c6] bg-[#bdd0e9]" />
          <Notes />
        </div>
      </main>
      <StatusBar />
    </div>
  );
}
